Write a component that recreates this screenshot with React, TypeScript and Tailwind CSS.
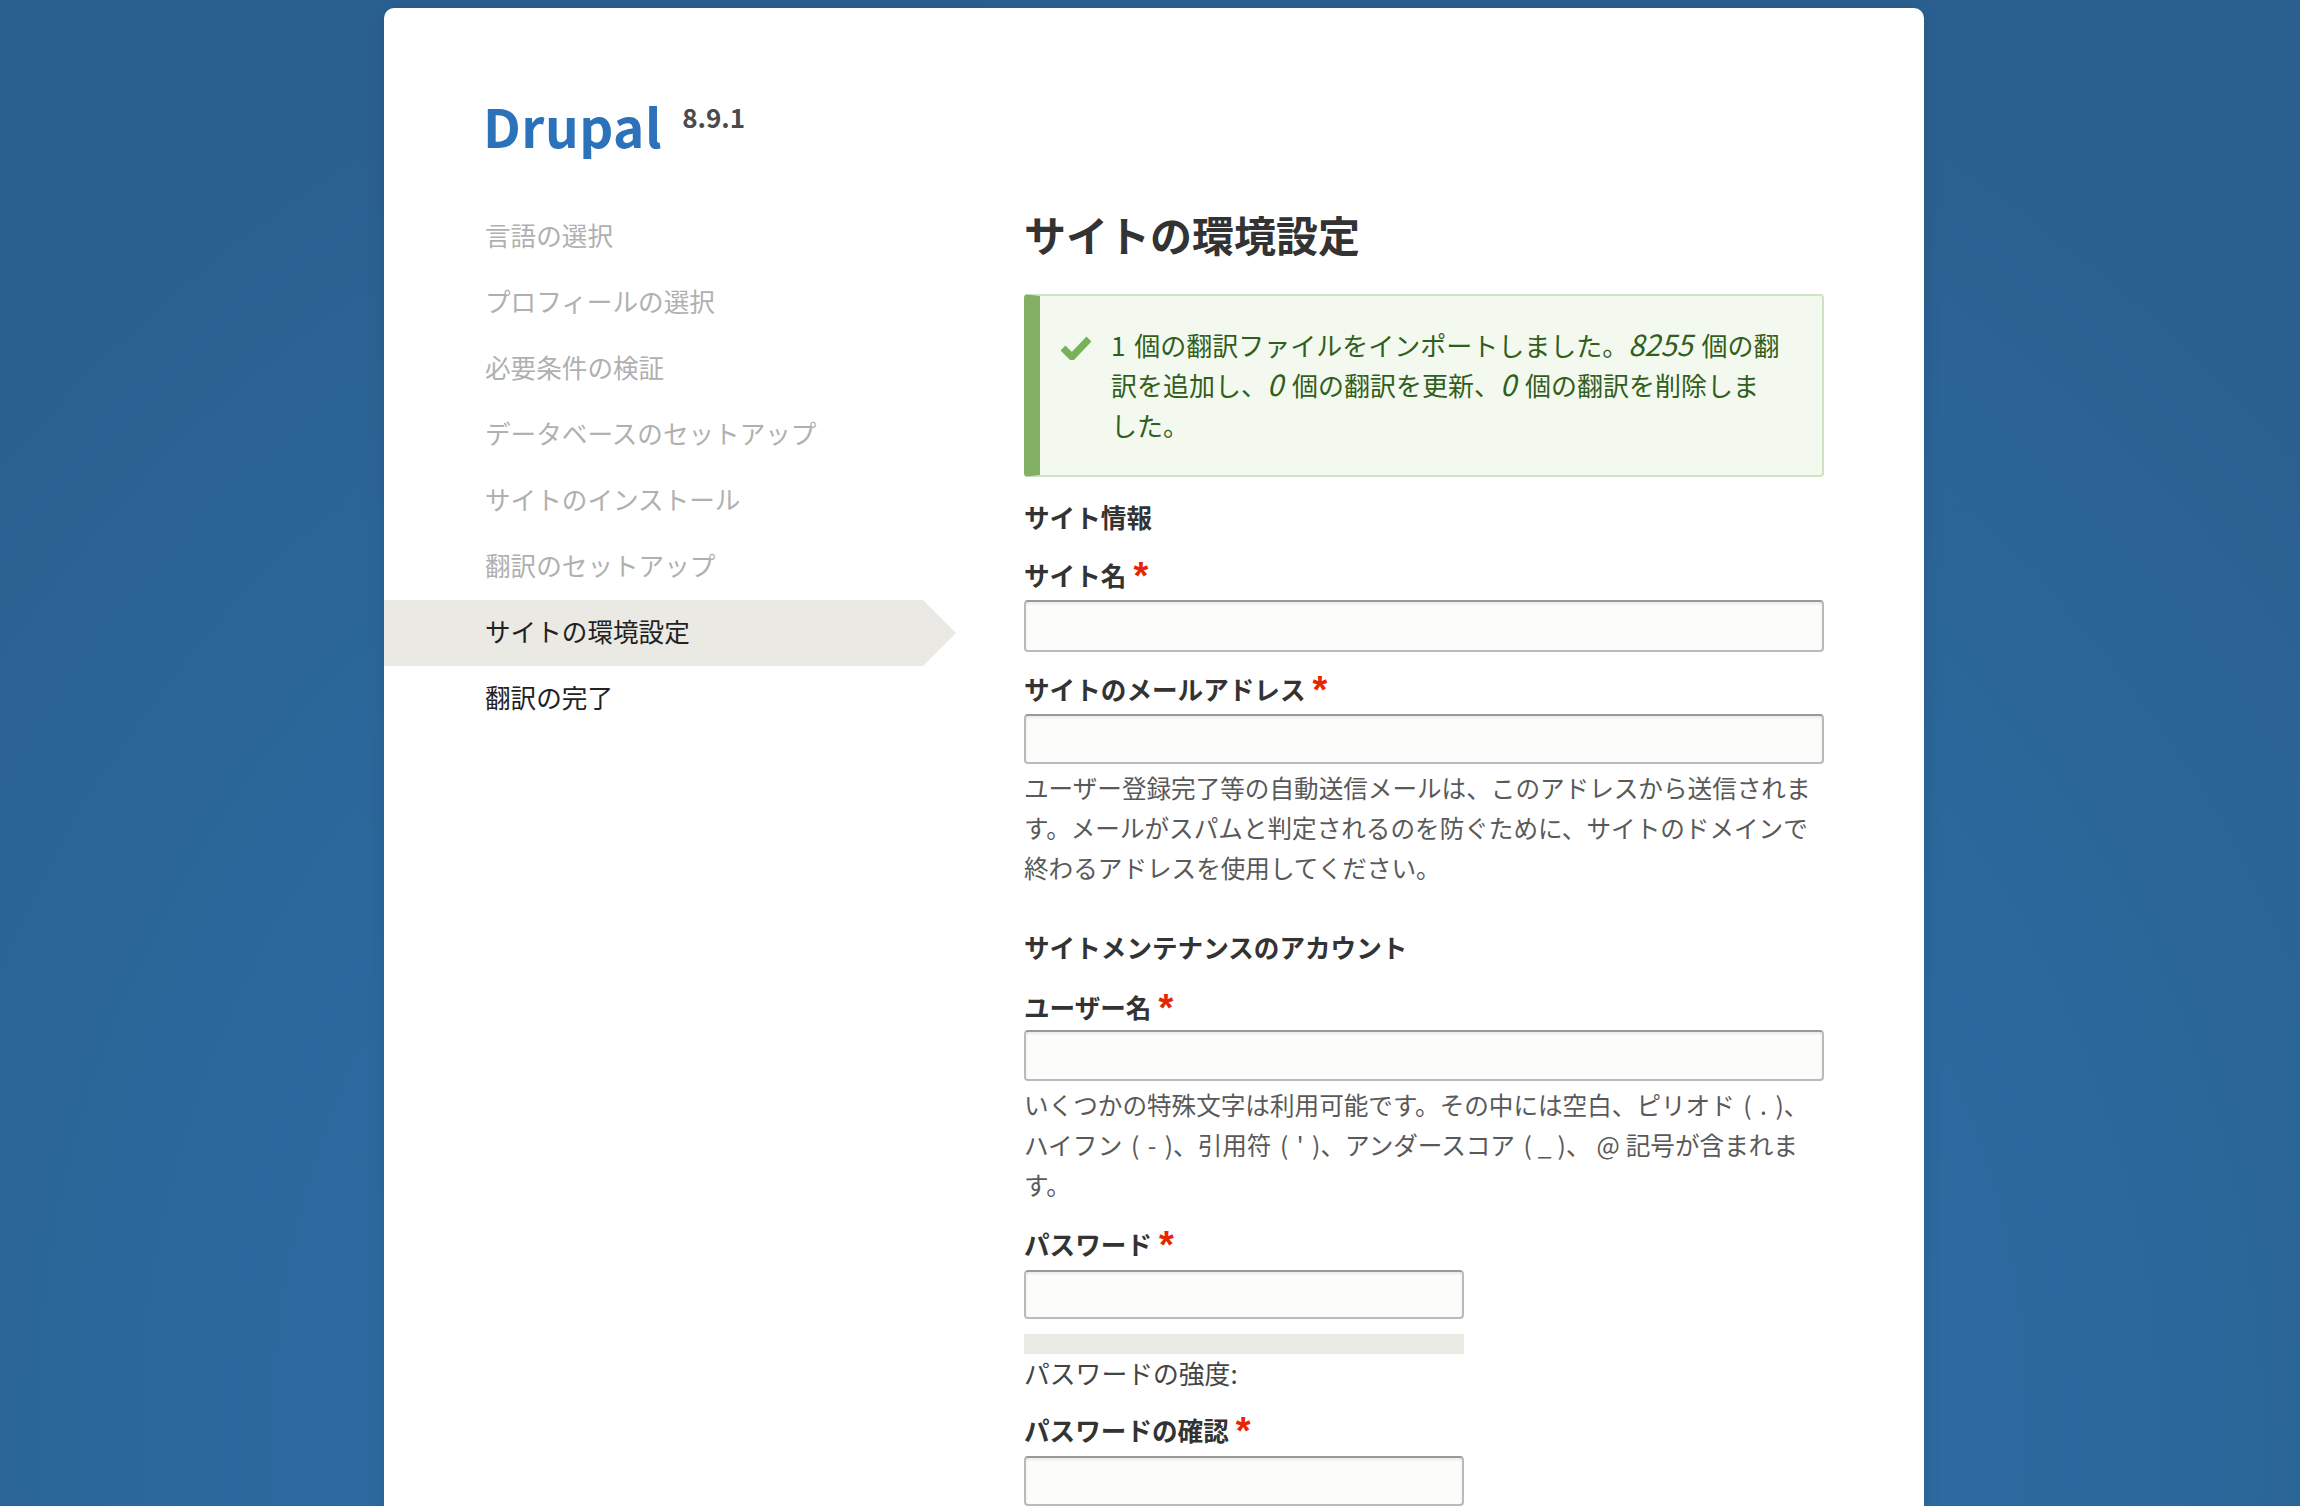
import * as React from "react";

const steps = [
  { label: "言語の選択", state: "done" },
  { label: "プロフィールの選択", state: "done" },
  { label: "必要条件の検証", state: "done" },
  { label: "データベースのセットアップ", state: "done" },
  { label: "サイトのインストール", state: "done" },
  { label: "翻訳のセットアップ", state: "done" },
  { label: "サイトの環境設定", state: "active" },
  { label: "翻訳の完了", state: "todo" },
];

function FieldLabel({ text, className }: { text: string; className: string }) {
  return (
    <div className={"flex items-center text-[25.6px] leading-[40px] font-bold text-[#333] " + className}>
      <span>{text}</span>
      <span className="ml-[7px] font-['Liberation_Sans',sans-serif] text-[38px] leading-[40px] font-bold text-[#e62600] relative top-[1px]">*</span>
    </div>
  );
}

function TextInput({ className }: { className: string }) {
  return (
    <input
      type="text"
      className={
        "block rounded-[4px] border-2 border-[#bababa] border-t-[#999] bg-[#fcfcfa] shadow-[inset_0_2px_3px_rgba(0,0,0,0.07)] " +
        className
      }
    />
  );
}

function Description({ children, className }: { children: React.ReactNode; className: string }) {
  return <div className={"text-[24.6px] leading-[40px] text-[#595959] " + className}>{children}</div>;
}

export default function App() {
  return (
    <div className="h-[1506px] overflow-hidden bg-[radial-gradient(ellipse_1500px_1500px_at_50%_95%,#3275ad_0%,#2c6a9f_55%,#2a6191_100%)] pt-[8px] font-['Noto_Sans_CJK_JP','Noto_Sans',sans-serif]">
      <div className="ml-[384px] h-[1600px] w-[1540px] rounded-[10px] bg-white shadow-[0_0_20px_rgba(0,0,0,0.1)]">
        <header className="flex h-[195px] items-start pl-[99px] pt-[81px]">
          <span className="text-[53px] leading-[72px] font-semibold tracking-[0.5px] text-[#2b72ba]">Drupal</span>
          <span className="ml-[20px] mt-[10px] text-[26px] leading-[36px] font-semibold text-[#4a4a4a]">8.9.1</span>
        </header>
        <div className="flex">
          <nav className="mt-px w-[640px] shrink-0 text-[25.6px]">
            {steps.map((s) => (
              <div
                key={s.label}
                className={
                  "flex h-[66px] w-[572px] items-center pb-[4px] pl-[101px] font-normal " +
                  (s.state === "done" ? "text-[#b0b0b0] " : "text-[#222] ") +
                  (s.state === "active"
                    ? "bg-[#eae9e4] [clip-path:polygon(0_0,539px_0,572px_50%,539px_100%,0_100%)]"
                    : "")
                }
              >
                {s.label}
              </div>
            ))}
          </nav>
          <main className="w-[800px] shrink-0 text-[26px] leading-[40px] text-[#333]">
            <h1 className="h-[64px] text-[42px] leading-[62px] font-bold text-[#333]">サイトの環境設定</h1>
            <div className="mt-[27px] flex h-[183px] rounded-[4px] border-2 border-l-[16px] border-[#cfe3c3] border-l-[#84b066] bg-[#f3f9ef] pl-[21px] pr-[40px] pt-[29px] text-[26px] text-[#325e1c]">
              <svg viewBox="0 0 30 24" className="mt-[11px] h-[24px] w-[30px] shrink-0" fill="none">
                <path d="M2 12 L11 21 L28 3" stroke="#77b259" strokeWidth="7" />
              </svg>
              <p className="ml-[20px] [word-spacing:3px]">
                1 個の翻訳ファイルをインポートしました。<em className="text-[29px] leading-none">8255</em> 個の翻
                <br />
                訳を追加し、<em className="text-[29px] leading-none">0</em> 個の翻訳を更新、<em className="text-[29px] leading-none">0</em> 個の翻訳を削除しま
                <br />
                した。
              </p>
            </div>
            <div className="mt-[20px] text-[25.6px] font-bold">サイト情報</div>
            <FieldLabel text="サイト名" className="mt-[18px]" />
            <TextInput className="mt-[5px] h-[52px] w-[800px]" />
            <FieldLabel text="サイトのメールアドレス" className="mt-[17px]" />
            <TextInput className="mt-[5px] h-[50px] w-[800px]" />
            <Description className="mt-[3px]">
              ユーザー登録完了等の自動送信メールは、このアドレスから送信されます。メールがスパムと判定されるのを防ぐために、サイトのドメインで終わるアドレスを使用してください。
            </Description>
            <div className="mt-[40px] text-[25.6px] font-bold">サイトメンテナンスのアカウント</div>
            <FieldLabel text="ユーザー名" className="mt-[20px]" />
            <TextInput className="mt-[3px] h-[51px] w-[800px]" />
            <Description className="mt-[3px] [word-spacing:3px]">
              いくつかの特殊文字は利用可能です。その中には空白、ピリオド ( . )、
              <br />
              ハイフン ( - )、引用符 ( ' )、アンダースコア <span className="[word-spacing:0.5px]">( _ )、 @ </span>記号が含まれま
              <br />
              す。
            </Description>
            <FieldLabel text="パスワード" className="mt-[20px]" />
            <TextInput className="mt-[6px] h-[49px] w-[440px]" />
            <div className="mt-[15px] h-[20px] w-[440px] bg-[#ebeae4]" />
            <div className="pb-[2px] text-[25.8px] leading-[38px] text-[#444]">パスワードの強度:</div>
            <FieldLabel text="パスワードの確認" className="mt-[16px]" />
            <TextInput className="mt-[6px] h-[50px] w-[440px]" />
          </main>
        </div>
      </div>
    </div>
  );
}
